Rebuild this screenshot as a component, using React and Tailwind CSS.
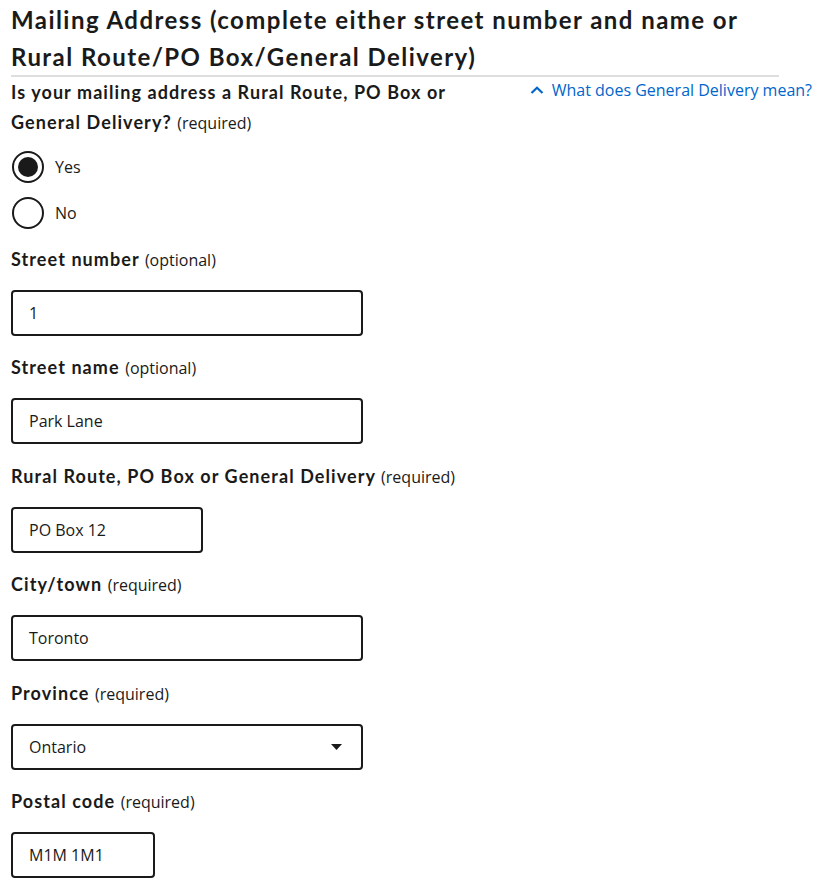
import React from "react";

const head = "font-['Lato','Open_Sans',sans-serif] font-bold tracking-[0.06em]";
const body = "font-['Open_Sans',sans-serif] font-normal tracking-normal";

function Note({ children }) {
  return <span className={`${body} text-[16px]`}>{children}</span>;
}

function Label({ title, note }) {
  return (
    <div className={`${head} text-[18px] leading-[28px] h-[28px] mb-[17px] whitespace-nowrap`}>
      {title} <Note>{note}</Note>
    </div>
  );
}

function Input({ value, w }) {
  return (
    <div
      className={`${w} h-[46px] border-2 border-[#1a1a1a] rounded-[4px] flex items-center pl-[16px] ${body} text-[16px]`}
    >
      {value}
    </div>
  );
}

function Radio({ checked, label }) {
  return (
    <div className="flex items-center h-[32px]">
      <div className="w-[32px] h-[32px] rounded-full border-2 border-[#1a1a1a] flex items-center justify-center ml-[1px]">
        {checked && <div className="w-[20px] h-[20px] rounded-full bg-[#1a1a1a]" />}
      </div>
      <span className={`${body} text-[16px] ml-[11px]`}>{label}</span>
    </div>
  );
}

export default function App() {
  const fields = [
    { title: "Street number", note: "(optional)", value: "1", w: "w-[352px]" },
    { title: "Street name", note: "(optional)", value: "Park Lane", w: "w-[352px]" },
    { title: "Rural Route, PO Box or General Delivery", note: "(required)", value: "PO Box 12", w: "w-[192px]" },
    { title: "City/town", note: "(required)", value: "Toronto", w: "w-[352px]" },
  ];
  return (
    <div className="w-[822px] h-[890px] bg-white pl-[11px] pt-[1px] text-[#1a1a1a]">
      <h2 className={`${head} w-[768px] border-b-2 border-[#dedede] text-[24px] leading-[37px] whitespace-nowrap`}>
        Mailing Address (complete either street number and name or
        <br />
        Rural Route/PO Box/General Delivery)
      </h2>
      <div className="flex justify-between w-[801px] h-[60px]">
        <div className={`${head} text-[18px] leading-[30px] whitespace-nowrap`}>
          Is your mailing address a Rural Route, PO Box or
          <br />
          General Delivery? <Note>(required)</Note>
        </div>
        <div className={`${body} flex items-center text-[16px] leading-[24px] text-[#0066cc] mt-[1px] h-[24px]`}>
          <svg width="14" height="8" viewBox="0 0 14 8" className="mr-[8px]" fill="none">
            <path d="M1.5 7 L7 1.8 L12.5 7" stroke="#0066cc" strokeWidth="2.2" />
          </svg>
          What does General Delivery mean?
        </div>
      </div>
      <div className="flex flex-col gap-[14px] mt-[14px] mb-[16px]">
        <Radio checked label="Yes" />
        <Radio label="No" />
      </div>
      <div className="flex flex-col gap-[17.4px]">
        {fields.map((f) => (
          <div key={f.title}>
            <Label title={f.title} note={f.note} />
            <Input value={f.value} w={f.w} />
          </div>
        ))}
        <div>
          <Label title="Province" note="(required)" />
          <div className={`w-[352px] h-[46px] border-2 border-[#1a1a1a] rounded-[4px] flex items-center justify-between pl-[16px] pr-[19px] ${body} text-[16px]`}>
            <span>Ontario</span>
            <svg width="11" height="6" viewBox="0 0 11 6">
              <path d="M0 0 L11 0 L5.5 6 Z" fill="#1a1a1a" />
            </svg>
          </div>
        </div>
        <div>
          <Label title="Postal code" note="(required)" />
          <Input value="M1M 1M1" w="w-[144px]" />
        </div>
      </div>
    </div>
  );
}
